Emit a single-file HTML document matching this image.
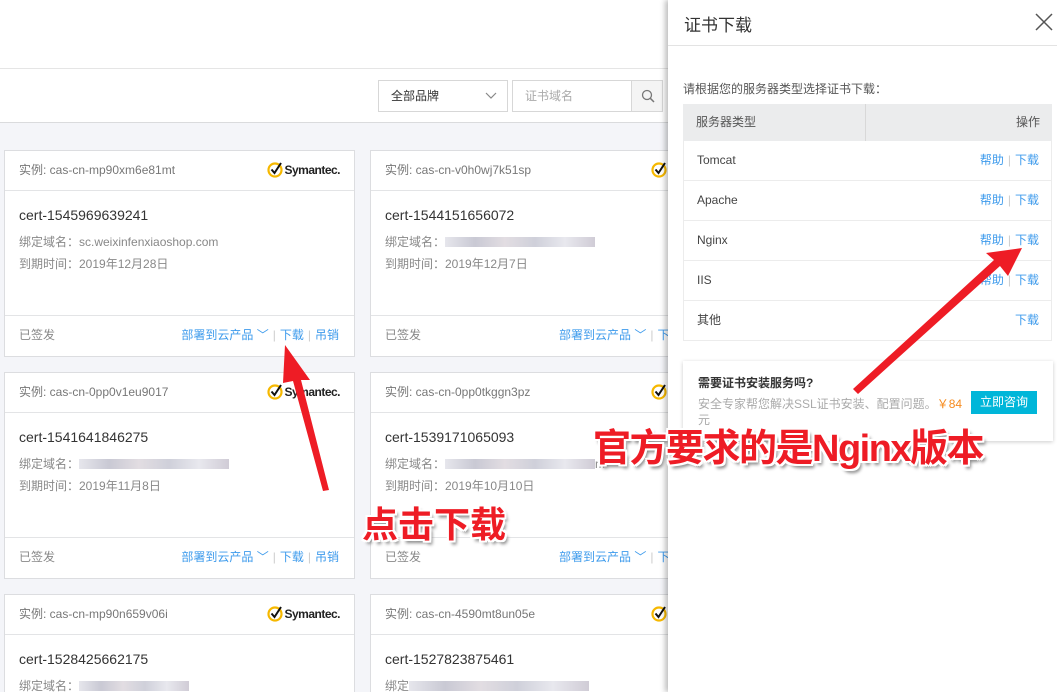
<!DOCTYPE html>
<html><head><meta charset="utf-8"><style>
*{margin:0;padding:0;box-sizing:border-box}
html,body{width:1057px;height:692px;overflow:hidden}
body{position:relative;background:#f4f5f9;font-family:"Liberation Sans","Noto Sans CJK SC",sans-serif;font-size:12px;color:#333}
.a{position:absolute}
.card{position:absolute;width:351px;height:207px;background:#fff;border:1px solid #dcdde0;overflow:hidden}
.card .h{height:40px;border-bottom:1px solid #e3e4e6;padding:0 14px;line-height:38px;color:#777;font-size:12px;position:relative}
.card .b{height:125px;border-bottom:1px solid #e3e4e6;padding:16px 14px 0}
.card .t{font-size:14px;color:#333;margin-bottom:8px}
.card .l{color:#888;line-height:22px}
.card .f{padding:0 14px;line-height:38px;color:#888;position:relative}
.card .f .r{position:absolute;right:15px;top:0;color:#3e9bec;white-space:nowrap}
.sep{color:#ccc;margin:0 4px}
.sym{position:absolute;right:14px;top:11px;font-size:12px;font-weight:bold;color:#222;letter-spacing:-0.5px;line-height:16px;white-space:nowrap}
.sym svg{vertical-align:-4px;margin-right:1px}
.blur{display:inline-block;height:10px;width:150px;vertical-align:-1px;background:linear-gradient(90deg,#e6e6ec,#c9c9d4,#e2dde2,#cfd0da,#e8e8ee,#d0ccd6)}
.tr{position:absolute;left:683px;width:369px;height:40px;border:1px solid #ececec;border-top:none;padding-left:13px;line-height:39px;color:#444}
.tr .r{position:absolute;right:12px;top:0;color:#3e9bec}
.big{position:absolute;color:#ee1c25;font-weight:bold;white-space:nowrap;text-shadow:2px 0 #fff,-2px 0 #fff,0 2px #fff,0 -2px #fff,2px 2px #fff,-2px -2px #fff,2px -2px #fff,-2px 2px #fff,3px 4px 3px #888}
</style></head><body>
<div class="a" style="left:0;top:0;width:1057px;height:122px;background:#fff"></div>
<div class="a" style="left:0;top:68px;width:670px;height:1px;background:#e5e5e5"></div>
<div class="a" style="left:0;top:122px;width:670px;height:1px;background:#dadbdd"></div>
<div class="a" style="left:378px;top:80px;width:130px;height:32px;border:1px solid #d7d7d7;line-height:30px;padding-left:12px;color:#333">全部品牌<svg class="a" style="right:10px;top:11px" width="12" height="8"><path d="M1 1 L6 6 L11 1" fill="none" stroke="#888" stroke-width="1.2"/></svg></div>
<div class="a" style="left:512px;top:80px;width:151px;height:32px;border:1px solid #d7d7d7;line-height:30px;padding-left:12px;color:#aaa">证书域名<div class="a" style="right:0;top:0;width:31px;height:30px;background:#f4f4f4;border-left:1px solid #d7d7d7"><svg class="a" style="left:9px;top:8px" width="14" height="14"><circle cx="6" cy="6" r="4.5" fill="none" stroke="#777" stroke-width="1.3"/><path d="M9.3 9.3 L13 13" stroke="#777" stroke-width="1.5"/></svg></div></div>

<div class="card" style="left:4px;top:150px"><div class="h">实例: cas-cn-mp90xm6e81mt<span class="sym"><svg width="16" height="16"><circle cx="8" cy="8" r="6.5" fill="none" stroke="#f6b800" stroke-width="2.2"/><path d="M4.5 7.5 L7.5 11 L14 1" fill="none" stroke="#111" stroke-width="2"/></svg>Symantec.</span></div><div class="b"><div class="t">cert-1545969639241</div><div class="l">绑定域名：sc.weixinfenxiaoshop.com</div><div class="l">到期时间：2019年12月28日</div></div><div class="f">已签发<span class="r">部署到云产品 ﹀<span class="sep">|</span>下载<span class="sep">|</span>吊销</span></div></div>
<div class="card" style="left:370px;top:150px"><div class="h">实例: cas-cn-v0h0wj7k51sp<span class="sym" style="right:auto;left:280px"><svg width="16" height="16"><circle cx="8" cy="8" r="6.5" fill="none" stroke="#f6b800" stroke-width="2.2"/><path d="M4.5 7.5 L7.5 11 L14 1" fill="none" stroke="#111" stroke-width="2"/></svg>Symantec.</span></div><div class="b"><div class="t">cert-1544151656072</div><div class="l">绑定域名：<span class="blur"></span></div><div class="l">到期时间：2019年12月7日</div></div><div class="f">已签发<span class="r" style="left:188px;right:auto">部署到云产品 ﹀<span class="sep">|</span>下载</span></div></div>
<div class="card" style="left:4px;top:372px"><div class="h">实例: cas-cn-0pp0v1eu9017<span class="sym"><svg width="16" height="16"><circle cx="8" cy="8" r="6.5" fill="none" stroke="#f6b800" stroke-width="2.2"/><path d="M4.5 7.5 L7.5 11 L14 1" fill="none" stroke="#111" stroke-width="2"/></svg>Symantec.</span></div><div class="b"><div class="t">cert-1541641846275</div><div class="l">绑定域名：<span class="blur"></span></div><div class="l">到期时间：2019年11月8日</div></div><div class="f">已签发<span class="r">部署到云产品 ﹀<span class="sep">|</span>下载<span class="sep">|</span>吊销</span></div></div>
<div class="card" style="left:370px;top:372px"><div class="h">实例: cas-cn-0pp0tkggn3pz<span class="sym" style="right:auto;left:280px"><svg width="16" height="16"><circle cx="8" cy="8" r="6.5" fill="none" stroke="#f6b800" stroke-width="2.2"/><path d="M4.5 7.5 L7.5 11 L14 1" fill="none" stroke="#111" stroke-width="2"/></svg>Symantec.</span></div><div class="b"><div class="t">cert-1539171065093</div><div class="l">绑定域名：<span class="blur"></span>m</div><div class="l">到期时间：2019年10月10日</div></div><div class="f">已签发<span class="r" style="left:188px;right:auto">部署到云产品 ﹀<span class="sep">|</span>下载</span></div></div>
<div class="card" style="left:4px;top:594px;height:98px;border-bottom:none"><div class="h">实例: cas-cn-mp90n659v06i<span class="sym"><svg width="16" height="16"><circle cx="8" cy="8" r="6.5" fill="none" stroke="#f6b800" stroke-width="2.2"/><path d="M4.5 7.5 L7.5 11 L14 1" fill="none" stroke="#111" stroke-width="2"/></svg>Symantec.</span></div><div class="b"><div class="t">cert-1528425662175</div><div class="l">绑定域名：<span class="blur" style="width:110px"></span></div></div></div>
<div class="card" style="left:370px;top:594px;height:98px;border-bottom:none"><div class="h">实例: cas-cn-4590mt8un05e<span class="sym" style="right:auto;left:280px"><svg width="16" height="16"><circle cx="8" cy="8" r="6.5" fill="none" stroke="#f6b800" stroke-width="2.2"/><path d="M4.5 7.5 L7.5 11 L14 1" fill="none" stroke="#111" stroke-width="2"/></svg>Symantec.</span></div><div class="b"><div class="t">cert-1527823875461</div><div class="l">绑定<span class="blur" style="width:180px"></span></div></div></div>

<div class="a" style="left:668px;top:0;width:389px;height:692px;background:#fff;box-shadow:-3px 0 5px rgba(0,0,0,0.25)"></div>
<div class="a" style="left:684px;top:11px;font-size:17px;color:#333">证书下载</div>
<svg class="a" style="left:1035px;top:13px" width="18" height="18"><path d="M1 1 L17 17 M17 1 L1 17" stroke="#555" stroke-width="1.5"/></svg>
<div class="a" style="left:668px;top:45px;width:389px;height:1px;background:#e3e3e3"></div>
<div class="a" style="left:683px;top:80px;color:#555">请根据您的服务器类型选择证书下载：</div>
<div class="a" style="left:683px;top:104px;width:369px;height:37px;background:#ebeced;line-height:37px;color:#555"><span style="position:absolute;left:13px">服务器类型</span><span style="position:absolute;left:182px;top:0;width:1px;height:37px;background:#d8d8d8"></span><span style="position:absolute;right:12px">操作</span></div>
<div class="tr" style="top:141px">Tomcat<span class="r">帮助<span class="sep">|</span>下载</span></div>
<div class="tr" style="top:181px">Apache<span class="r">帮助<span class="sep">|</span>下载</span></div>
<div class="tr" style="top:221px">Nginx<span class="r">帮助<span class="sep">|</span>下载</span></div>
<div class="tr" style="top:261px">IIS<span class="r">帮助<span class="sep">|</span>下载</span></div>
<div class="tr" style="top:301px">其他<span class="r">下载</span></div>
<div class="a" style="left:683px;top:361px;width:370px;height:80px;background:#fff;box-shadow:0 1px 4px rgba(0,0,0,0.2)">
<div class="a" style="left:15px;top:13px;font-weight:bold;color:#333">需要证书安装服务吗?</div>
<div class="a" style="left:15px;top:34px;color:#aaa">安全专家帮您解决SSL证书安装、配置问题。<span style="color:#f68b1f">￥84</span></div>
<div class="a" style="left:15px;top:50px;color:#aaa">元</div>
<div class="a" style="left:288px;top:30px;width:66px;height:23px;background:#00b6d9;color:#fff;text-align:center;line-height:23px">立即咨询</div>
</div>

<svg class="a" style="left:0;top:0" width="1057" height="692">
<polygon points="285,345 310,380 301,380 329,490 323,491 293,381 283,383" fill="#ee1c25"/>
<polygon points="1022,248 1008,276 1000,266 858,394 853,389 994,260 986,253" fill="#ee1c25"/>
</svg>
<div class="big" style="left:362px;top:496px;font-size:36px">点击下载</div>
<div class="big" style="left:593px;top:417px;font-size:38px;letter-spacing:-1.5px">官方要求的是Nginx版本</div>
</body></html>
